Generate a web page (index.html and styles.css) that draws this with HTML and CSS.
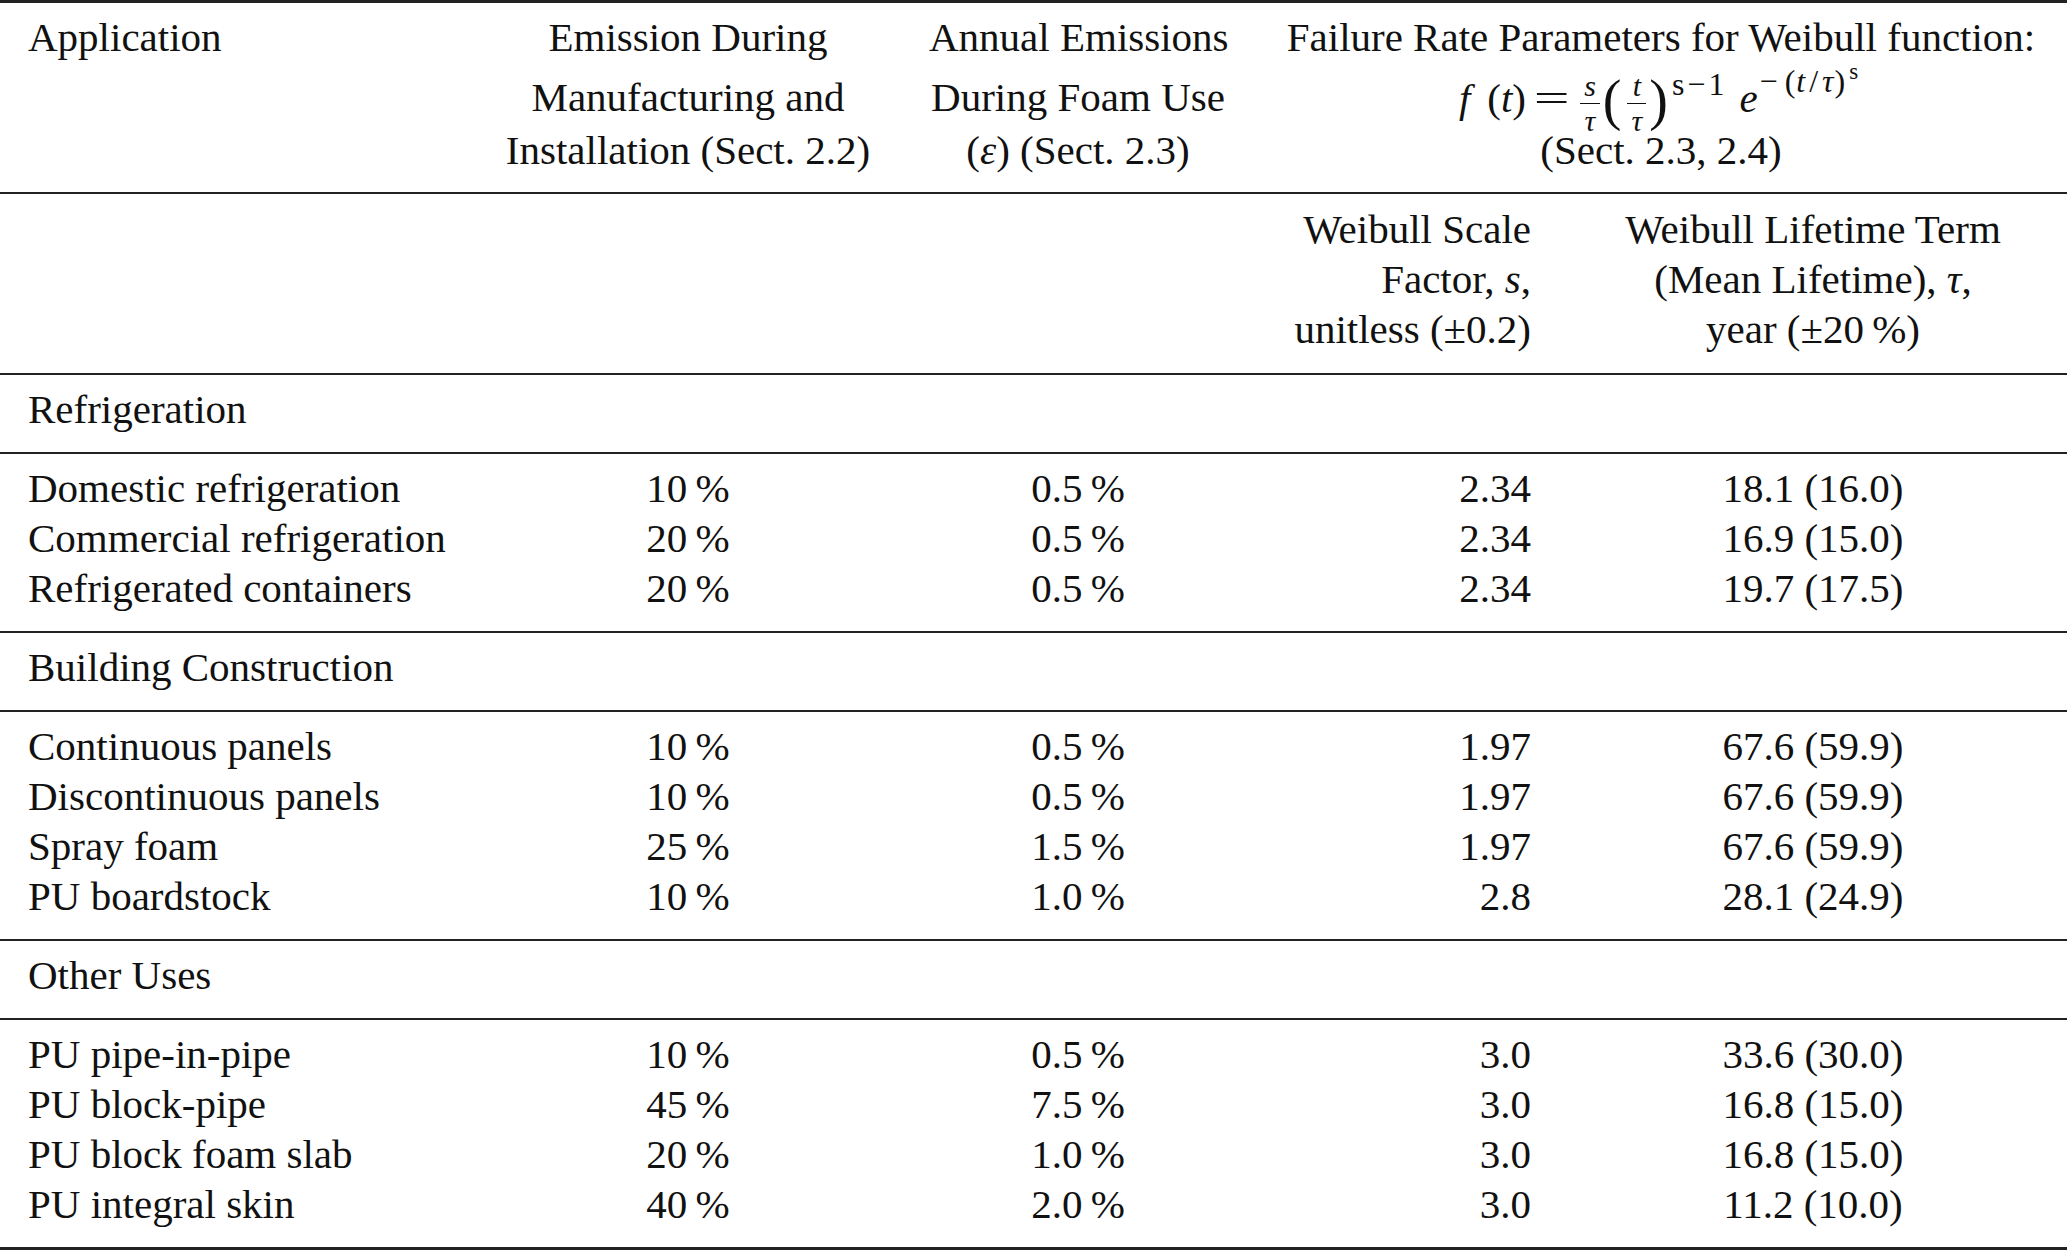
FILE: index.html
```html
<!DOCTYPE html>
<html lang="en">
<head>
<meta charset="utf-8">
<title>Foam emission parameters</title>
<link rel="stylesheet" href="styles.css">
</head>
<body>
<table class="tbl">
  <colgroup>
    <col class="c1"><col class="c2"><col class="c3"><col class="c4"><col class="c5">
  </colgroup>
  <thead>
    <tr class="h1">
      <th class="left">Application</th>
      <th class="center">Emission During</th>
      <th class="center">Annual Emissions</th>
      <th class="center" colspan="2">Failure Rate Parameters for Weibull function:</th>
    </tr>
    <tr class="h2">
      <th></th>
      <th class="center">Manufacturing and</th>
      <th class="center">During Foam Use</th>
      <th class="center" colspan="2"><span class="math"><i>f</i><span class="ts"> </span>(<i>t</i>)<span class="rel">=</span><span class="frac"><span class="fn"><i>s</i></span><span class="fd"><i>τ</i></span></span><span class="bp bpl">(</span><span class="frac"><span class="fn"><i>t</i></span><span class="fd"><i>τ</i></span></span><span class="bp bpr">)</span><span class="sup">s<span class="mn">−</span>1</span><i class="e">e</i><span class="sup2"><span class="mn2">−</span>(<i>t</i><span class="sl">/</span><i>τ</i>)<span class="sup3">s</span></span></span></th>
    </tr>
    <tr class="h3 rule">
      <th></th>
      <th class="center">Installation (Sect. 2.2)</th>
      <th class="center">(<i>ε</i>) (Sect. 2.3)</th>
      <th class="center" colspan="2">(Sect. 2.3, 2.4)</th>
    </tr>
    <tr class="sub rule">
      <th></th>
      <th></th>
      <th></th>
      <th class="right">Weibull Scale<br>Factor, <i>s</i>,<br>unitless (±0.2)</th>
      <th class="center">Weibull Lifetime Term<br>(Mean Lifetime), <i>τ</i>,<br>year (±20&#8201;%)</th>
    </tr>
  </thead>
  <tbody>
    <tr class="section rule"><td colspan="5">Refrigeration</td></tr>
    <tr class="first"><td>Domestic refrigeration</td><td class="center">10&#8201;%</td><td class="center">0.5&#8201;%</td><td class="right">2.34</td><td class="center">18.1 (16.0)</td></tr>
    <tr><td>Commercial refrigeration</td><td class="center">20&#8201;%</td><td class="center">0.5&#8201;%</td><td class="right">2.34</td><td class="center">16.9 (15.0)</td></tr>
    <tr class="last rule"><td>Refrigerated containers</td><td class="center">20&#8201;%</td><td class="center">0.5&#8201;%</td><td class="right">2.34</td><td class="center">19.7 (17.5)</td></tr>

    <tr class="section rule"><td colspan="5">Building Construction</td></tr>
    <tr class="first"><td>Continuous panels</td><td class="center">10&#8201;%</td><td class="center">0.5&#8201;%</td><td class="right">1.97</td><td class="center">67.6 (59.9)</td></tr>
    <tr><td>Discontinuous panels</td><td class="center">10&#8201;%</td><td class="center">0.5&#8201;%</td><td class="right">1.97</td><td class="center">67.6 (59.9)</td></tr>
    <tr><td>Spray foam</td><td class="center">25&#8201;%</td><td class="center">1.5&#8201;%</td><td class="right">1.97</td><td class="center">67.6 (59.9)</td></tr>
    <tr class="last rule"><td>PU boardstock</td><td class="center">10&#8201;%</td><td class="center">1.0&#8201;%</td><td class="right">2.8</td><td class="center">28.1 (24.9)</td></tr>

    <tr class="section rule"><td colspan="5">Other Uses</td></tr>
    <tr class="first"><td>PU pipe-in-pipe</td><td class="center">10&#8201;%</td><td class="center">0.5&#8201;%</td><td class="right">3.0</td><td class="center">33.6 (30.0)</td></tr>
    <tr><td>PU block-pipe</td><td class="center">45&#8201;%</td><td class="center">7.5&#8201;%</td><td class="right">3.0</td><td class="center">16.8 (15.0)</td></tr>
    <tr><td>PU block foam slab</td><td class="center">20&#8201;%</td><td class="center">1.0&#8201;%</td><td class="right">3.0</td><td class="center">16.8 (15.0)</td></tr>
    <tr class="last bottom"><td>PU integral skin</td><td class="center">40&#8201;%</td><td class="center">2.0&#8201;%</td><td class="right">3.0</td><td class="center">11.2 (10.0)</td></tr>
  </tbody>
</table>
</body>
</html>
```

FILE: styles.css
```css
html, body {
  margin: 0;
  padding: 0;
  background: #ffffff;
}

body {
  font-family: "Liberation Serif", "Times New Roman", serif;
  font-size: 41px;
  color: #111111;
}

.tbl {
  width: 2067px;
  table-layout: fixed;
  border-collapse: separate;
  border-spacing: 0;
}

.c1 { width: 475px; }
.c2 { width: 426px; }
.c3 { width: 354px; }
.c4 { width: 304px; }
.c5 { width: 508px; }

.tbl th,
.tbl td {
  padding: 0 28px;
  line-height: 50px;
  font-weight: normal;
  white-space: nowrap;
  vertical-align: top;
  text-align: left;
}

.tbl .center { text-align: center; }
.tbl .right { text-align: right; }
.tbl .left { text-align: left; }

.tbl i { font-style: italic; }

/* header rows */
.h1 th {
  border-top: 3px solid #222222;
  padding-top: 9px;
}

.h2 th {
  padding-top: 10px;
  padding-bottom: 2px;
}

.h3 th {
  padding-bottom: 17px;
}

.sub th {
  padding-top: 10px;
  padding-bottom: 19px;
}

.rule th,
.rule td {
  border-bottom: 2px solid #222222;
}

.section td {
  padding-top: 9px;
  padding-bottom: 18px;
}

.first td { padding-top: 9px; }
.last td { padding-bottom: 18px; }

.bottom td {
  border-bottom: 3px solid #222222;
}

/* formula */
.math {
  display: inline-block;
  white-space: nowrap;
  padding-right: 4px;
}

.math .ts {
  display: inline-block;
  width: 17px;
}

.math .rel {
  display: inline-block;
  margin: 0 15px 0 14px;
  transform: scaleX(1.55);
}

.frac {
  display: inline-flex;
  flex-direction: column;
  align-items: stretch;
  font-size: 30px;
  line-height: 34px;
  vertical-align: 16px;
  margin: -8px 2px -18px;
}

.frac .fn,
.frac .fd {
  display: block;
  text-align: center;
  padding: 0 4px;
}

.frac .fn {
  border-bottom: 1.5px solid #111111;
}

.bp {
  font-size: 56px;
  line-height: 0;
  vertical-align: -7px;
}

.bpl { margin: 0 4px 0 1px; }
.bpr { margin: 0 2px 0 1px; }

.sup {
  font-size: 32px;
  line-height: 0;
  vertical-align: 17px;
  margin: 0 15px 0 2px;
}

.sup .mn {
  margin: 0 3px;
}

.e {
  display: inline-block;
}

.sup2 {
  font-size: 32px;
  line-height: 0;
  vertical-align: 20px;
  margin-left: 2px;
  letter-spacing: 1px;
}

.sup2 .mn2 {
  margin-right: 6px;
}

.sup2 .sl {
  margin: 0 3px;
}

.sup3 {
  font-size: 23px;
  line-height: 0;
  vertical-align: 13px;
  margin-left: 3px;
}
```
